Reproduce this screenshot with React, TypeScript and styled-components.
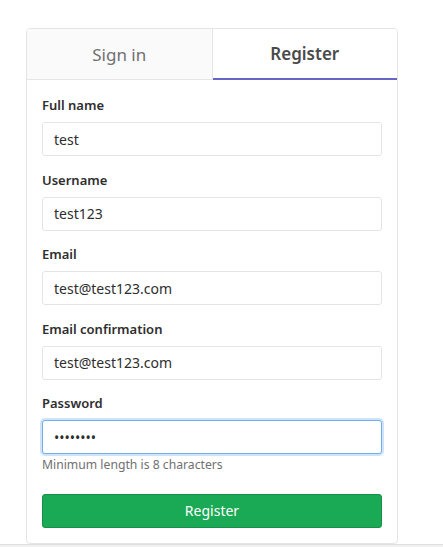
import React from "react";
import styled, { createGlobalStyle } from "styled-components";

const Global = createGlobalStyle`
  html, body { margin: 0; padding: 0; background: #fff; }
  body { font-family: "Noto Sans", "DejaVu Sans", sans-serif; color: #2e2e2e; }
  * { box-sizing: border-box; }
`;

const Page = styled.div`
  display: flex;
  flex-direction: column;
  height: 547px;
  overflow: hidden;
`;

const Main = styled.div`
  flex: 1;
  padding: 28px 0 0 26px;
`;

const Card = styled.div`
  width: 372px;
  border: 1px solid #e5e5e5;
  border-radius: 4px;
  background: #fff;
  overflow: hidden;
`;

const Tabs = styled.div`
  display: flex;
`;

const Tab = styled.div<{ $active?: boolean }>`
  flex: 1;
  height: 51px;
  display: flex;
  align-items: center;
  justify-content: center;
  font-size: 17px;
  font-weight: ${(p) => (p.$active ? 600 : 400)};
  color: ${(p) => (p.$active ? "#4a4a4a" : "#707070")};
  background: ${(p) => (p.$active ? "#fff" : "#fafafa")};
  border-bottom: ${(p) => (p.$active ? "2px solid #6666c4" : "1px solid #e5e5e5")};
  border-right: ${(p) => (p.$active ? "none" : "1px solid #e5e5e5")};
`;

const Body = styled.form`
  padding: 15px 15px 15px;
  display: flex;
  flex-direction: column;
`;

const Group = styled.div`
  display: flex;
  flex-direction: column;
  margin-bottom: 13.5px;
`;

const Label = styled.label`
  font-size: 13px;
  font-weight: 600;
  line-height: 20px;
  margin-bottom: 7px;
  color: #2e2e2e;
`;

const Input = styled.input<{ $focus?: boolean }>`
  height: 34px;
  width: 100%;
  padding: 0 11px;
  font-family: inherit;
  font-size: 14px;
  color: #2e2e2e;
  border: 1px solid ${(p) => (p.$focus ? "#73afea" : "#e5e5e5")};
  border-radius: 3px;
  outline: none;
  box-shadow: ${(p) => (p.$focus ? "0 0 0 2px rgba(115,175,234,0.35)" : "none")};
  background: #fff;
`;

const Help = styled.div`
  margin-top: 2px;
  font-size: 12.2px;
  line-height: 18px;
  color: #707070;
`;

const Button = styled.button`
  margin-top: 6px;
  height: 34px;
  width: 100%;
  background: #1aaa55;
  border: 1px solid #168f48;
  border-radius: 3px;
  color: #fff;
  font-family: inherit;
  font-size: 14px;
`;

const Footer = styled.div`
  height: 4px;
  border-top: 1px solid #e0e0e0;
  background: #f0f0f0;
`;

export default function App() {
  return (
    <Page>
      <Global />
      <Main>
        <Card>
          <Tabs>
            <Tab>Sign in</Tab>
            <Tab $active>Register</Tab>
          </Tabs>
          <Body onSubmit={(e) => e.preventDefault()}>
            <Group>
              <Label>Full name</Label>
              <Input defaultValue="test" />
            </Group>
            <Group>
              <Label>Username</Label>
              <Input defaultValue="test123" />
            </Group>
            <Group>
              <Label>Email</Label>
              <Input defaultValue="test@test123.com" />
            </Group>
            <Group>
              <Label>Email confirmation</Label>
              <Input defaultValue="test@test123.com" />
            </Group>
            <Group>
              <Label>Password</Label>
              <Input $focus type="password" defaultValue="12345678" />
              <Help>Minimum length is 8 characters</Help>
            </Group>
            <Button type="submit">Register</Button>
          </Body>
        </Card>
      </Main>
      <Footer />
    </Page>
  );
}
